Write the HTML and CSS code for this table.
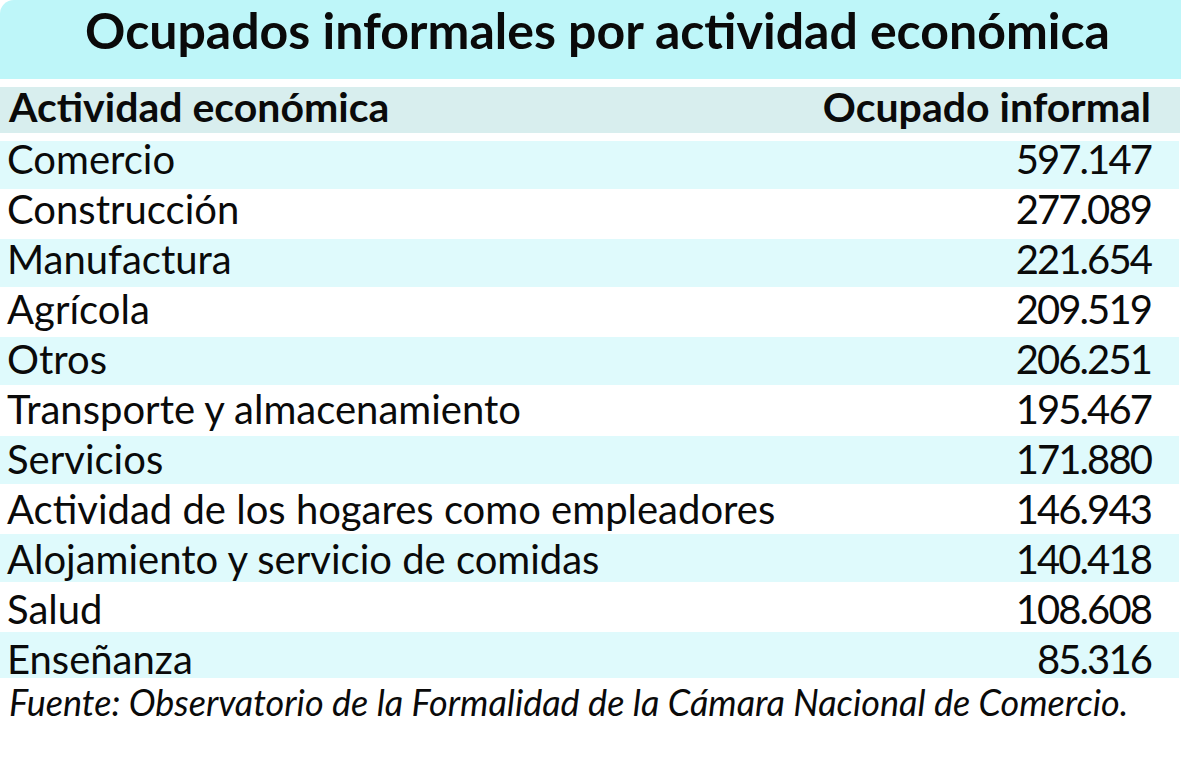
FILE: index.html
```html
<!DOCTYPE html>
<html lang="es">
<head>
<meta charset="utf-8">
<title>Ocupados informales por actividad económica</title>
<link rel="stylesheet" href="styles.css">
</head>
<body>
<div class="card">
  <h1 class="title">Ocupados informales por actividad económica</h1>
  <div class="head">
    <span class="label">Actividad económica</span>
    <span class="value">Ocupado informal</span>
  </div>
  <div class="rows">
    <div class="row"><span class="label">Comercio</span><span class="value">597.147</span></div>
    <div class="row"><span class="label">Construcción</span><span class="value">277.089</span></div>
    <div class="row"><span class="label">Manufactura</span><span class="value">221.654</span></div>
    <div class="row"><span class="label">Agrícola</span><span class="value">209.519</span></div>
    <div class="row"><span class="label">Otros</span><span class="value">206.251</span></div>
    <div class="row"><span class="label">Transporte y almacenamiento</span><span class="value">195.467</span></div>
    <div class="row"><span class="label">Servicios</span><span class="value">171.880</span></div>
    <div class="row"><span class="label">Actividad de los hogares como empleadores</span><span class="value">146.943</span></div>
    <div class="row"><span class="label">Alojamiento y servicio de comidas</span><span class="value">140.418</span></div>
    <div class="row"><span class="label">Salud</span><span class="value">108.608</span></div>
    <div class="row"><span class="label">Enseñanza</span><span class="value">85.316</span></div>
  </div>
  <p class="source">Fuente: Observatorio de la Formalidad de la Cámara Nacional de Comercio.</p>
</div>
</body>
</html>
```
FILE: styles.css
```css
html, body {
  margin: 0;
  padding: 0;
  background: #ffffff;
}
body {
  font-family: "Lato", "Open Sans", sans-serif;
  color: #0a0a0a;
}
.card {
  width: 1182px;
  display: flex;
  flex-direction: column;
}
.title {
  margin: 0;
  width: 1181px;
  height: 79px;
  box-sizing: border-box;
  padding: 0 0 19px 14px;
  background: #bef6f9;
  border-top-left-radius: 14px;
  font-size: 50px;
  font-weight: 700;
  line-height: 60px;
  text-align: center;
}
.head {
  margin-top: 8px;
  width: 1180px;
  height: 46px;
  box-sizing: border-box;
  padding: 0 29px 6px 9px;
  background: #d8eeee;
  display: flex;
  justify-content: space-between;
  font-size: 41px;
  font-weight: 700;
  line-height: 40px;
}
.rows {
  margin-top: 8px;
  width: 1179px;
  display: flex;
  flex-direction: column;
  background: repeating-linear-gradient(to bottom,
    #dffafc 0, #dffafc 48px,
    #ffffff 48px, #ffffff 98.2px);
}
.row {
  height: 50px;
  box-sizing: border-box;
  padding: 0 28px 14px 7px;
  display: flex;
  justify-content: space-between;
  font-size: 40px;
  line-height: 36px;
}
.row:last-child {
  height: 37px;
  padding-bottom: 1px;
}
.row .value {
  letter-spacing: -1.9px;
}
.source {
  margin: 0;
  padding: 4px 0 0 9px;
  font-size: 36px;
  font-style: italic;
  line-height: 40px;
}
```
